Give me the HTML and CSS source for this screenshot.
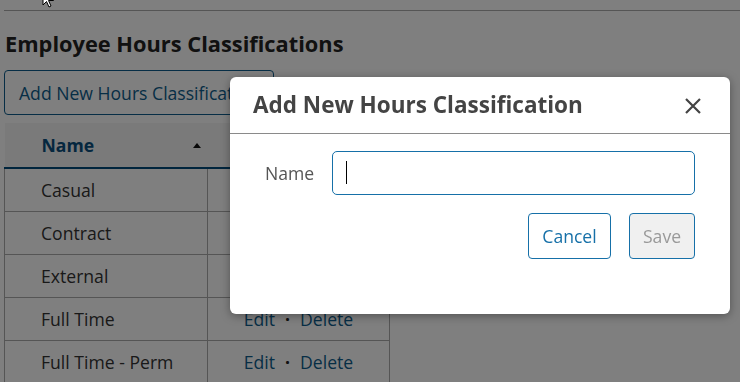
FILE: index.html
```html
<!DOCTYPE html>
<html>
<head>
<meta charset="utf-8">
<link rel="stylesheet" href="styles.css">
</head>
<body>
<div class="page">
  <div class="topline"></div>
  <h1 class="title">Employee Hours Classifications</h1>
  <button class="btn-outline add-btn">Add New Hours Classification</button>
  <table class="grid">
    <colgroup><col class="c1"><col class="c2"></colgroup>
    <thead>
      <tr><th class="col-name">Name <span class="sort"></span></th><th class="col-act"></th></tr>
    </thead>
    <tbody>
      <tr><td>Casual</td><td class="act"><a>Edit</a><span class="dot">·</span><a>Delete</a></td></tr>
      <tr><td>Contract</td><td class="act"><a>Edit</a><span class="dot">·</span><a>Delete</a></td></tr>
      <tr><td>External</td><td class="act"><a>Edit</a><span class="dot">·</span><a>Delete</a></td></tr>
      <tr><td>Full Time</td><td class="act"><a>Edit</a><span class="dot">·</span><a>Delete</a></td></tr>
      <tr><td>Full Time - Perm</td><td class="act"><a>Edit</a><span class="dot">·</span><a>Delete</a></td></tr>
    </tbody>
  </table>
</div>
<div class="overlay"></div>
<div class="modal">
  <div class="modal-head">
    <h2 class="modal-title">Add New Hours Classification</h2>
    <svg class="close" width="18" height="18" viewBox="0 0 18 18"><path d="M2 2L16 16M16 2L2 16" stroke="#444" stroke-width="2.2" fill="none"/></svg>
  </div>
  <div class="modal-body">
    <div class="field">
      <label class="label">Name</label>
      <div class="input-wrap"><input class="input" type="text" aria-label="Name"><span class="caret"></span></div>
    </div>
    <div class="actions">
      <button class="btn-outline cancel">Cancel</button>
      <button class="btn-outline save">Save</button>
    </div>
  </div>
</div>
<svg class="pointer" width="14" height="20" viewBox="0 0 14 20"><path d="M1 1L1 15L4.5 11.5L7 17L9 16L6.5 10.5L11.5 10.5Z" fill="#fff" stroke="#000" stroke-width="1"/></svg>
</body>
</html>
```
FILE: styles.css
```css
html, body {
  margin: 0;
  padding: 0;
  background: #fff;
  font-family: "Open Sans", "Liberation Sans", sans-serif;
  overflow: hidden;
}
.page {
  padding-left: 4px;
}
.topline {
  margin-top: 10px;
  height: 1px;
  background: #aaa;
}
.title {
  margin: 18px 0 0 1px;
  font-size: 21.8px;
  line-height: 30px;
  font-weight: 700;
  color: #222;
}
.btn-outline {
  font-family: "Open Sans", "Liberation Sans", sans-serif;
  font-size: 17.6px;
  background: #fff;
  border: 1px solid #1670a8;
  border-radius: 4px;
  color: #1670a8;
  cursor: pointer;
}
.add-btn {
  display: block;
  margin-top: 11px;
  height: 45px;
  padding: 0 14px;
  color: #0e5d8c;
  border-color: #0e5d8c;
  white-space: nowrap;
}
.grid {
  margin-top: 8px;
  border-collapse: collapse;
  table-layout: fixed;
  width: 385px;
  font-size: 17.6px;
  color: #333;
}
.c1 { width: 203px; }
.c2 { width: 182px; }
.grid th {
  background: #f4f4f4;
  height: 44px;
  padding: 0;
  text-align: left;
  border-bottom: 2px solid #004a7a;
  color: #0a4f7e;
  font-weight: 700;
}
.col-name {
  padding-left: 37px !important;
  position: relative;
}
.sort {
  position: absolute;
  right: 7px;
  top: 20px;
  width: 0;
  height: 0;
  border-left: 4px solid transparent;
  border-right: 4px solid transparent;
  border-bottom: 5px solid #111;
}
.grid td {
  height: 42px;
  padding: 0 0 0 36px;
  border: 1px solid #aaa;
  border-top: 0;
  white-space: nowrap;
}
.grid td.act {
  padding: 0;
  text-align: center;
  color: #0e5d8c;
}
.act a {
  color: #0e5d8c;
}
.dot {
  display: inline-block;
  margin: 0 10px;
  color: #222;
  font-weight: 700;
}
.overlay {
  position: fixed;
  inset: 0;
  background: rgba(0, 0, 0, 0.5);
}
.modal {
  position: fixed;
  left: 230px;
  top: 77px;
  width: 500px;
  height: 237px;
  background: #fff;
  border-radius: 6px;
  box-shadow: 0 2px 10px rgba(0, 0, 0, 0.35);
  display: flex;
  flex-direction: column;
}
.modal-head {
  height: 57px;
  border-bottom: 1px solid #8a8a8a;
  display: flex;
  align-items: center;
  justify-content: space-between;
  padding: 0 28px 0 23px;
  box-sizing: border-box;
}
.modal-title {
  margin: 0;
  font-size: 22.5px;
  font-weight: 700;
  color: #444;
  line-height: 30px;
}
.close {
  display: block;
  margin-top: 1px;
}
.modal-body {
  padding: 17px 35px 0 35px;
  display: flex;
  flex-direction: column;
}
.field {
  display: flex;
  align-items: center;
  gap: 18px;
}
.label {
  font-size: 17.6px;
  color: #555;
}
.input-wrap {
  position: relative;
  flex: 1;
}
.input {
  display: block;
  width: 100%;
  height: 44px;
  box-sizing: border-box;
  border: 1px solid #1670a8;
  border-radius: 5px;
  outline: none;
  padding: 0 13px;
  font-size: 17.6px;
  font-family: "Open Sans", "Liberation Sans", sans-serif;
  caret-color: transparent;
}
.caret {
  position: absolute;
  left: 14px;
  top: 10px;
  width: 1px;
  height: 23px;
  background: #000;
}
.actions {
  display: flex;
  justify-content: flex-end;
  gap: 18px;
  margin-top: 18px;
}
.cancel {
  width: 83px;
  height: 46px;
}
.save {
  width: 66px;
  height: 46px;
  background: #f0f0f0;
  color: #999;
}
.pointer {
  position: fixed;
  left: 42px;
  top: -10px;
}
```
